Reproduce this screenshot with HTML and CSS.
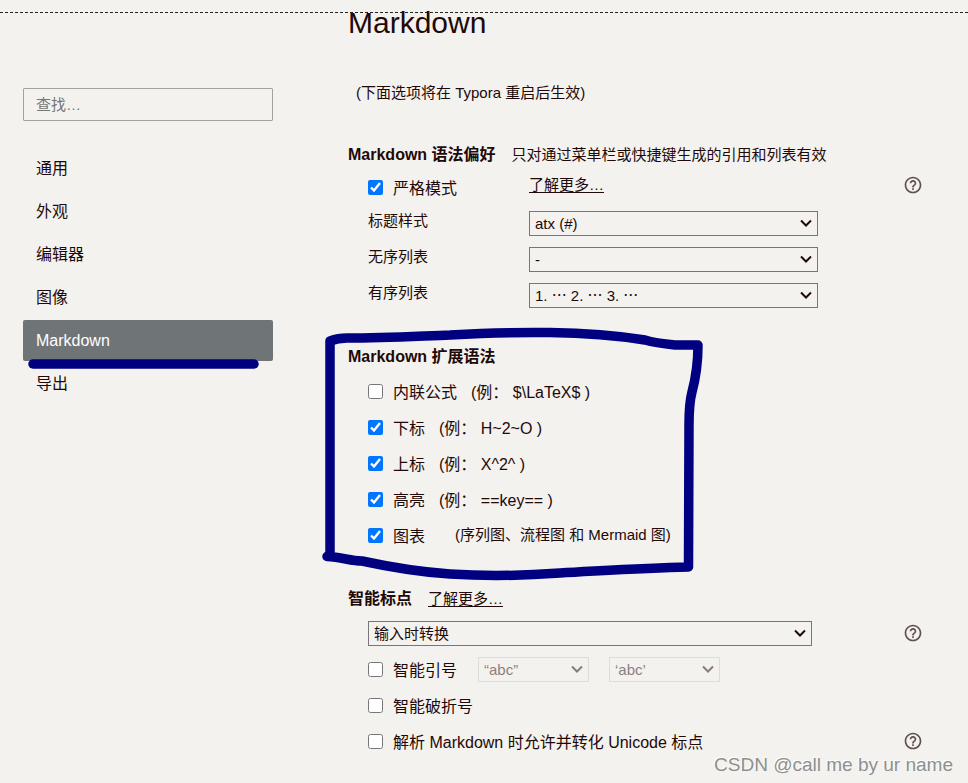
FILE: index.html
```html
<!DOCTYPE html>
<html lang="zh-CN">
<head>
    <meta charset="UTF-8">
    <meta name="viewport" content="width=device-width, initial-scale=1.0">
    <title>Markdown</title>
    <link rel="stylesheet" href="styles.css">
</head>
<body>
    <svg class="symbols" width="0" height="0">
        <symbol id="icon-help" viewBox="0 0 24 24">
            <path d="M11 18h2v-2h-2v2zm1-16C6.48 2 2 6.48 2 12s4.48 10 10 10 10-4.48 10-10S17.52 2 12 2zm0 18c-4.41 0-8-3.59-8-8s3.59-8 8-8 8 3.59 8 8-3.59 8-8 8zm0-14c-2.21 0-4 1.79-4 4h2c0-1.1.9-2 2-2s2 .9 2 2c0 2-3 1.75-3 5h2c0-2.25 3-2.5 3-5 0-2.21-1.79-4-4-4z"/>
        </symbol>
    </svg>

    <div class="top-line"></div>

    <div class="preferences">
        <aside class="sidebar">
            <input type="search" class="search" placeholder="查找…" aria-label="查找">
            <nav class="nav">
                <a href="#general">通用</a>
                <a href="#appearance">外观</a>
                <a href="#editor">编辑器</a>
                <a href="#image">图像</a>
                <a href="#markdown" class="active">Markdown
                    <svg class="underline" viewBox="0 0 250 10" width="250" height="10"><path d="M10 5H231"/></svg>
                </a>
                <a href="#export">导出</a>
            </nav>
        </aside>

        <main class="panel">
            <h1>Markdown</h1>
            <p class="restart-note">(下面选项将在 Typora 重启后生效)</p>

            <section class="group">
                <div class="group-title">
                    <h2>Markdown 语法偏好</h2>
                    <span class="note">只对通过菜单栏或快捷键生成的引用和列表有效</span>
                </div>
                <div class="row row-strict">
                    <label class="check name"><input type="checkbox" checked>严格模式</label>
                    <a href="#strict" class="more">了解更多…</a>
                    <button type="button" class="help" aria-label="帮助"><svg><use href="#icon-help"/></svg></button>
                </div>
                <div class="row">
                    <label class="name small" for="heading-style">标题样式</label>
                    <select id="heading-style"><option>atx (#)</option></select>
                </div>
                <div class="row">
                    <label class="name small" for="unordered-list">无序列表</label>
                    <select id="unordered-list"><option>-</option></select>
                </div>
                <div class="row">
                    <label class="name small" for="ordered-list">有序列表</label>
                    <select id="ordered-list"><option>1. ⋯ 2. ⋯ 3. ⋯</option></select>
                </div>
            </section>

            <section class="group marked">
                <div class="group-title">
                    <h2>Markdown 扩展语法</h2>
                </div>
                <div class="row">
                    <label class="check"><input type="checkbox">内联公式<span class="example">(例： $\LaTeX$ )</span></label>
                </div>
                <div class="row">
                    <label class="check"><input type="checkbox" checked>下标<span class="example">(例： H~2~O )</span></label>
                </div>
                <div class="row">
                    <label class="check"><input type="checkbox" checked>上标<span class="example">(例： X^2^ )</span></label>
                </div>
                <div class="row">
                    <label class="check"><input type="checkbox" checked>高亮<span class="example">(例： ==key== )</span></label>
                </div>
                <div class="row">
                    <label class="check"><input type="checkbox" checked>图表</label>
                    <span class="note diagram-note">(序列图、流程图 和 Mermaid 图)</span>
                </div>
                <svg class="outline" viewBox="320 324 386 260" width="386" height="260">
                    <path d="M330 556V341Q338 338 347 338C385 338 420 336 450 335C485 333 515 332 550 332.500C590 333 620 336 645 340C655 343 665 344 675 345H698C698 365 696 377 692 392C689 403 689 412 689 425L688.500 567C640 568 600 571 560 573C520 576 480 576 450 574C420 572 385 566 362 561C350 561 342 557 327 556.500"/>
                </svg>
            </section>

            <section class="group">
                <div class="group-title">
                    <h2>智能标点</h2>
                    <a href="#smart" class="more">了解更多…</a>
                </div>
                <div class="row">
                    <select class="wide" aria-label="智能标点"><option>输入时转换</option></select>
                    <button type="button" class="help" aria-label="帮助"><svg><use href="#icon-help"/></svg></button>
                </div>
                <div class="row">
                    <label class="check"><input type="checkbox">智能引号</label>
                    <div class="quotes">
                        <select disabled aria-label="双引号"><option>“abc”</option></select>
                        <select disabled aria-label="单引号"><option>‘abc’</option></select>
                    </div>
                </div>
                <div class="row">
                    <label class="check"><input type="checkbox">智能破折号</label>
                </div>
                <div class="row">
                    <label class="check"><input type="checkbox">解析 Markdown 时允许并转化 Unicode 标点</label>
                    <button type="button" class="help" aria-label="帮助"><svg><use href="#icon-help"/></svg></button>
                </div>
            </section>
        </main>
    </div>

    <div class="watermark">CSDN @call me by ur name</div>
</body>
</html>
```
FILE: styles.css
```css
* {
    box-sizing: border-box;
}

body {
    margin: 0;
    min-height: 100vh;
    position: relative;
    background: #f3f2ee;
    color: #1f0909;
    font-family: "Liberation Sans", "Noto Sans CJK SC", sans-serif;
    font-size: 16px;
    line-height: 24px;
}

h1, h2, p {
    margin: 0;
}

a {
    color: inherit;
}

.symbols {
    position: absolute;
}

.top-line {
    height: 13px;
    border-bottom: 1px dashed #222;
}

.preferences {
    display: flex;
    gap: 75px;
    padding: 0 45px 0 23px;
}

/* sidebar */
.sidebar {
    flex: 0 0 250px;
    padding-top: 75px;
}

.search {
    display: block;
    width: 100%;
    height: 33px;
    padding: 0 12px;
    border: 1px solid #a3a29f;
    border-radius: 1px;
    background: transparent;
    font: inherit;
    font-size: 15px;
    appearance: none;
}

.search::placeholder {
    color: #757575;
}

.nav {
    display: flex;
    flex-direction: column;
    gap: 2px;
    margin-top: 27px;
}

.nav a {
    position: relative;
    padding: 9px 13px 8px;
    border-radius: 2px;
    text-decoration: none;
}

.nav .active {
    background: #6f7577;
    color: #fff;
}

.underline {
    position: absolute;
    left: 0;
    top: 39px;
    z-index: 1;
}

.underline path,
.outline path {
    fill: none;
    stroke: #000080;
    stroke-width: 9.5;
    stroke-linecap: round;
    stroke-linejoin: round;
}

/* settings */
.panel {
    flex: 1;
    min-width: 0;
}

h1 {
    font-size: 30px;
    font-weight: normal;
    line-height: 20px;
}

.restart-note {
    margin: 48px 0 32px;
    padding-left: 8px;
    font-size: 15px;
}

.group {
    margin-bottom: 26px;
}

.group-title {
    display: flex;
    align-items: center;
    gap: 16px;
    height: 36px;
}

h2 {
    font-size: 16px;
    line-height: 24px;
}

.note,
.more,
.small {
    font-size: 15px;
}

.more {
    text-underline-offset: 2px;
}

.row {
    display: flex;
    align-items: center;
    height: 36px;
    padding-left: 20px;
}

.row-strict {
    height: 32px;
}

.row-strict .more,
.row-strict .help {
    margin-bottom: 8px;
}

.name {
    flex: 0 0 161px;
}

.small {
    padding-bottom: 4px;
}

.check {
    display: flex;
    align-items: center;
}

.check input {
    width: 15px;
    height: 15px;
    margin: 0 10px 4px 0;
}

.example {
    margin-left: 14px;
}

.diagram-note {
    margin-left: 30px;
    padding-bottom: 4px;
}

select {
    width: 289px;
    height: 25px;
    padding: 0 20px 0 5px;
    border: 1px solid #767676;
    border-radius: 0;
    background: transparent url("data:image/svg+xml,%3Csvg xmlns='http://www.w3.org/2000/svg' width='12' height='8'%3E%3Cpath d='M1 1.500l5 5 5-5' fill='none' stroke='%231f0909' stroke-width='2'/%3E%3C/svg%3E") no-repeat right 5px center;
    color: inherit;
    font: inherit;
    font-size: 15px;
    appearance: none;
}

select:disabled {
    border-color: #c9c8c5;
    opacity: 0.5;
}

.wide {
    width: 444px;
    margin-bottom: 4px;
}

.quotes {
    display: flex;
    gap: 20px;
    margin: 0 0 4px 21px;
}

.quotes select {
    width: 111px;
}

.help {
    width: 20px;
    height: 20px;
    margin: 0 0 4px auto;
    padding: 0;
    border: 0;
    background: none;
    color: #624f4f;
}

.help svg {
    display: block;
    width: 20px;
    height: 20px;
    fill: currentColor;
}

.marked {
    position: relative;
}

.outline {
    position: absolute;
    left: -28px;
    top: -15px;
    pointer-events: none;
}

.watermark {
    position: absolute;
    right: 15px;
    bottom: 10px;
    color: #8f8f8d;
    font-size: 19px;
    text-shadow: -1px -1px 0 #fff;
}
```
